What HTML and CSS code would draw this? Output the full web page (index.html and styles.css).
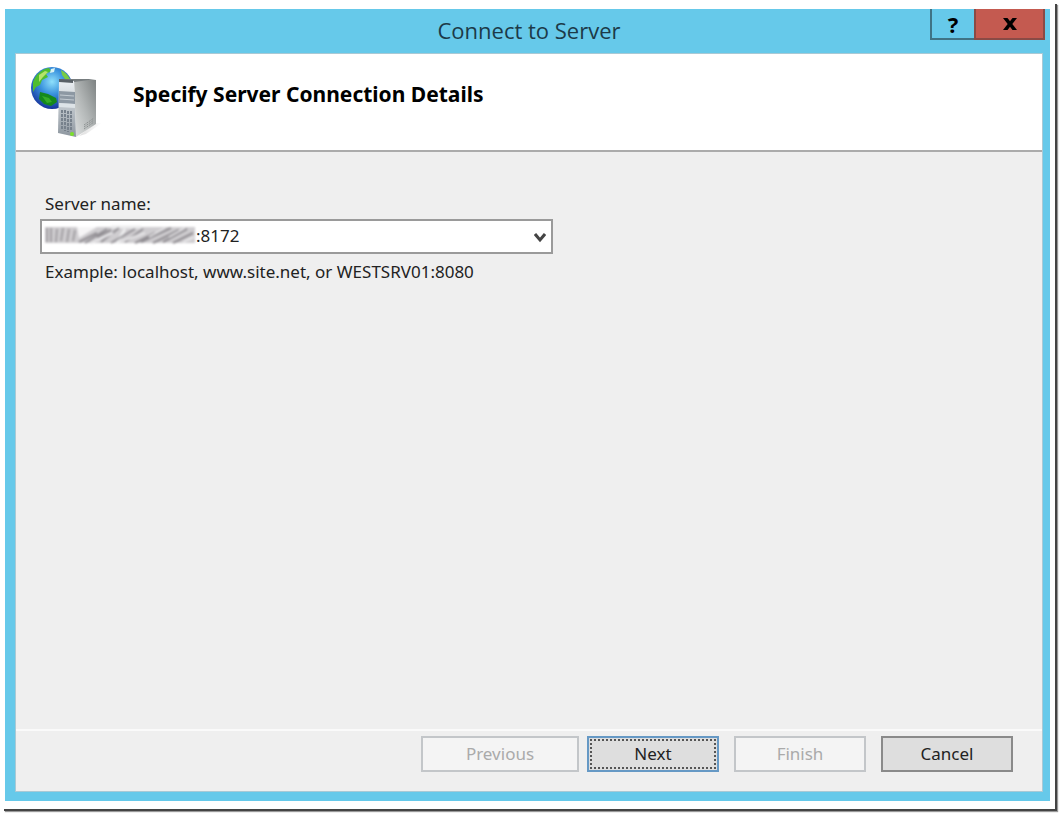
FILE: index.html
```html
<!DOCTYPE html>
<html lang="en">
<head>
  <meta charset="UTF-8">
  <title>Connect to Server</title>
  <link rel="stylesheet" href="styles.css">
</head>
<body>

  <div class="frame">
    <div class="window">
      <header class="titlebar">
        <h1>Connect to Server</h1>
        <div class="window-buttons">
          <button type="button" class="help">?</button>
          <button type="button" class="close" aria-label="Close">
            <svg width="14" height="12" viewBox="0 0 14 12">
              <path d="M0 0H4.500L7 3.300 9.500 0H14L9.300 6 14 12H9.500L7 8.700 4.500 12H0L4.700 6Z" fill="#000"/>
            </svg>
          </button>
        </div>
      </header>

      <form class="wizard">
        <div class="banner">
          <svg class="logo" width="72" height="76" viewBox="0 0 72 76">
            <defs>
              <radialGradient id="sea" cx="0.5" cy="0.35" r="0.65">
                <stop offset="0" stop-color="#8fe0fa"/>
                <stop offset="0.45" stop-color="#3a93de"/>
                <stop offset="1" stop-color="#17349c"/>
              </radialGradient>
              <linearGradient id="side" x1="0" y1="1" x2="1" y2="0">
                <stop offset="0" stop-color="#dfe2e2"/>
                <stop offset="0.5" stop-color="#b2b6b6"/>
                <stop offset="1" stop-color="#7d8282"/>
              </linearGradient>
              <linearGradient id="front" x1="0" y1="0" x2="0" y2="1">
                <stop offset="0" stop-color="#edf1f4"/>
                <stop offset="1" stop-color="#8d969f"/>
              </linearGradient>
              <linearGradient id="ground" x1="0" y1="0" x2="1" y2="0">
                <stop offset="0" stop-color="#ddd"/>
                <stop offset="1" stop-color="#fff"/>
              </linearGradient>
            </defs>
            <circle cx="21" cy="21" r="21" fill="url(#sea)"/>
            <path d="M2 15C5 7 11 2 18 1L20 4 15 7 17 10 11 13 9 18 5 20 2 25Z" fill="#4fbd2e"/>
            <path d="M8 8L14 4 17 5 12 10 8 15Z" fill="#b5e36a"/>
            <path d="M20 2L24 1 23 5 19 6Z" fill="#d9f3f4"/>
            <path d="M30 3C34 5 37 8 39 12L34 12 31 8Z" fill="#79cc45"/>
            <path d="M9 25L17 27 25 31 26 35 20 39 13 37 8 32Z" fill="#15891c"/>
            <path d="M11 29L18 31 21 35 16 36Z" fill="#35ad27"/>
            <path d="M48 69L64 56 71 56 55 67Z" fill="url(#ground)"/>
            <path d="M43 13H65V57L45 70Z" fill="url(#side)"/>
            <path d="M28 13L30 12H65L43 15Z" fill="#777d7f"/>
            <path d="M28 13L43 14 45 70 27 66Z" fill="url(#front)"/>
            <path d="M28 12L42 13 42 16 28 15Z" fill="#596066"/>
            <path d="M28 24L44 25V37L28 36Z" fill="#8d98a3"/>
            <path d="M28 36L44 37V41L28 40Z" fill="#dde3e7"/>
            <path d="M29 28L43 29M29 32L43 33" stroke="#c3cbd2" fill="none"/>
            <path d="M31 43V63M34 43V64M37 44V65M40 44V63" stroke="#77818c" stroke-width="2" stroke-dasharray="3 1" fill="none"/>
            <path d="M53 60L63 53M53 58L63 51M53 62L63 55" stroke="#8c9191" stroke-dasharray="2 1" fill="none"/>
            <circle cx="41" cy="67" r="2" fill="#7be02a"/>
          </svg>
          <h2>Specify Server Connection Details</h2>
        </div>

        <div class="content">
          <label for="server">Server name:</label>
          <div class="combo">
            <select id="server">
              <option>:8172</option>
            </select>
            <svg class="scribble" width="150" height="20" viewBox="0 0 150 20">
              <rect y="2" width="150" height="16" fill="#cfcdd0"/>
              <path d="M2 17V3M6 17V3M11 17L12 4M16 16L18 3M22 17L24 4M28 16L30 5" stroke="#858286" stroke-width="2" opacity="0.6"/>
              <path d="M32 2L52 2 34 13" fill="#f6f5f6"/>
              <path d="M66 2L96 2M72 18L80 4" stroke="#ededee" stroke-width="3" fill="none"/>
              <path d="M34 17L52 8M40 18L62 4M52 12L66 5M56 17L74 3M66 18L90 4M80 17L98 4M90 18L110 8M96 17L126 3M108 18L134 5M118 17L142 4M128 18L148 8" stroke="#77747a" stroke-width="2" opacity="0.7"/>
              <path d="M46 18L68 8M74 17L100 8M104 12L120 3M124 12L140 3M138 17L149 12" stroke="#e6e5e7" stroke-width="2"/>
            </svg>
            <svg class="arrow" width="12" height="10" viewBox="0 0 12 10">
              <path d="M1 1L6 7 11 1" fill="none" stroke="#444" stroke-width="3"/>
            </svg>
          </div>
          <p>Example: localhost, www.site.net, or WESTSRV01:8080</p>
        </div>

        <div class="actions">
          <button type="button" class="previous" disabled>Previous</button>
          <button type="button" class="next">Next</button>
          <button type="button" class="finish" disabled>Finish</button>
          <button type="button" class="cancel">Cancel</button>
        </div>
      </form>
    </div>
  </div>

</body>
</html>
```

FILE: styles.css
```css
* {
  box-sizing: border-box;
}

body {
  min-height: 100vh;
  margin: 0;
  padding: 2px 4px 4px 2px;
  background-color: white;
  color: #222;
  font-family: "Noto Sans", "Open Sans", sans-serif;
  font-size: 17px;
  line-height: 24px;
  display: flex;
}

h1, h2, p {
  margin: 0;
}

button, select {
  font: inherit;
  color: inherit;
  border-radius: 0;
}

.frame {
  flex: 1;
  padding: 7px 5px 8px 3px;
  background-color: white;
  box-shadow: 2px 2px 0 #444, 3px 3px 1px #999;
  display: flex;
}

.window {
  flex: 1;
  padding: 0 7px 9px 10px;
  background-color: #66c9ea;
  display: flex;
  flex-direction: column;
}

.titlebar {
  position: relative;
  height: 44px;
}

.titlebar h1 {
  font-family: "Open Sans", "Noto Sans", sans-serif;
  font-size: 22px;
  font-weight: normal;
  line-height: 42px;
  text-align: center;
  color: #1c3a48;
}

.window-buttons {
  position: absolute;
  top: 0;
  right: -2px;
  display: flex;
}

.window-buttons button {
  height: 31px;
  padding: 0;
  border: 2px solid #3f7385;
  border-top: none;
  color: black;
}

.window-buttons .help {
  width: 44px;
  background-color: #66c9ea;
  border-right: none;
  font-size: 22px;
  font-weight: bold;
}

.window-buttons .close {
  width: 71px;
  background-color: #c45a50;
  border-color: #8a4a45;
}

.wizard {
  flex: 1;
  border: 1px solid #a9c9d5;
  background-color: #efefef;
  display: flex;
  flex-direction: column;
}

.banner {
  height: 98px;
  padding: 13px 15px;
  background-color: white;
  border-bottom: 2px solid #ababab;
  display: flex;
  gap: 30px;
}

.banner h2 {
  font-size: 21px;
  line-height: 54px;
  color: black;
}

.content {
  flex: 1;
  padding: 40px 24px;
}

.content label, .content p {
  display: block;
  margin-left: 5px;
}

.combo {
  position: relative;
  max-width: 513px;
  margin: 3px 0 6px;
}

.combo select {
  display: block;
  width: 100%;
  height: 35px;
  padding: 0 0 2px 154px;
  appearance: none;
  background-color: white;
  border: 2px solid #9a9a9a;
}

.scribble {
  position: absolute;
  top: 6px;
  left: 5px;
  filter: blur(1px);
  pointer-events: none;
}

.arrow {
  position: absolute;
  top: 14px;
  right: 7px;
  pointer-events: none;
}

.actions {
  padding: 5px 29px 19px;
  border-top: 2px solid #fafafa;
  display: flex;
  justify-content: flex-end;
}

.actions button {
  width: 132px;
  height: 36px;
  padding: 0;
  border: 2px solid #8a8a8a;
  background-color: #dedede;
}

.actions .previous {
  width: 158px;
  margin-right: 8px;
}

.actions .next {
  border-color: #6699c5;
  outline: 2px dotted #555;
  outline-offset: -5px;
}

.actions .finish {
  margin: 0 15px;
}

.actions button:disabled {
  border-color: #c3c6c9;
  background-color: #f4f4f4;
  color: #aaa;
}
```
